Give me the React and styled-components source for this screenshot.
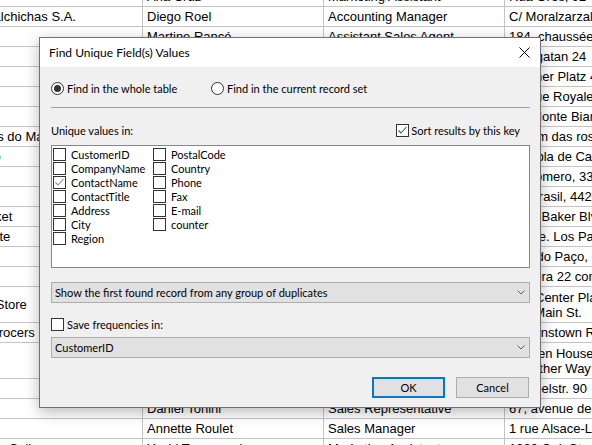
import React from 'react'
import styled, { createGlobalStyle } from 'styled-components'

const GlobalStyle = createGlobalStyle`
  *, *::before, *::after { box-sizing: border-box; }
  html, body { margin: 0; padding: 0; background: #fff; }
  body { width: 592px; height: 445px; overflow: hidden; }
`;

const uiFont = `"Lato", "Liberation Sans", sans-serif`;

const rows = [
  ['Familia Arquibaldo', 'Aria Cruz', 'Marketing Assistant', 'Rua Orós, 92'],
  ['FISSA Fabrica Inter. Salchichas S.A.', 'Diego Roel', 'Accounting Manager', 'C/ Moralzarzal, 86'],
  ['Folies gourmandes', 'Martine Rancé', 'Assistant Sales Agent', '184, chaussée de Tournai'],
  ['Folk och fä HB', 'Maria Larsson', 'Owner', 'Åkergatan 24'],
  ['Frankenversand', 'Peter Franken', 'Marketing Manager', 'Berliner Platz 43'],
  ['France restauration', 'Carine Schmitt', 'Marketing Manager', '54, rue Royale'],
  ['Franchi S.p.A.', 'Paolo Accorti', 'Sales Representative', 'Via Monte Bianco 34'],
  ['Furia Bacalhau e Frutos do Mar', 'Lino Rodriguez', 'Sales Manager', 'Jardim das rosas n. 32'],
  ['Galería del gastrónomo', 'Eduardo Saavedra', 'Marketing Manager', 'Rambla de Cataluña, 23'],
  ['Godos Cocina Típica', 'José Pedro Freyre', 'Sales Manager', 'C/ Romero, 33'],
  ['Gourmet Lanchonetes', 'André Fonseca', 'Sales Associate', 'Av. Brasil, 442'],
  ['Great Lakes Food Market', 'Howard Snyder', 'Marketing Manager', '2732 Baker Blvd.'],
  ['GROSELLA-Restaurante', 'Manuel Pereira', 'Owner', '5ª Ave. Los Palos Grandes'],
  ['Hanari Carnes', 'Mario Pontes', 'Accounting Manager', 'Rua do Paço, 67'],
  ['HILARION-Abastos', 'Carlos Hernández', 'Sales Representative', 'Carrera 22 con Ave. Carlos Soublette #8-35'],
  ['Hungry Coyote Import Store', 'Yoshi Latimer', 'Sales Representative', 'City Center Plaza\n516 Main St.'],
  ['Hungry Owl All-Night Grocers', 'Patricia McKenna', 'Sales Associate', '8 Johnstown Road'],
  ['Island Trading', 'Helen Bennett', 'Marketing Manager', 'Garden House\nCrowther Way'],
  ['Königlich Essen', 'Philip Cramer', 'Sales Associate', 'Maubelstr. 90'],
  ["La corne d'abondance", 'Daniel Tonini', 'Sales Representative', "67, avenue de l'Europe"],
  ["La maison d'Asie", 'Annette Roulet', 'Sales Manager', '1 rue Alsace-Lorraine'],
  ['Laughing Bacchus Wine Cellars', 'Yoshi Tannamuri', 'Marketing Assistant', '1900 Oak St.'],
];

const fieldsLeft = ['CustomerID', 'CompanyName', 'ContactName', 'ContactTitle', 'Address', 'City', 'Region'];
const fieldsRight = ['PostalCode', 'Country', 'Phone', 'Fax', 'E-mail', 'counter'];

const Screen = styled.div`
  position: relative;
  width: 592px;
  height: 445px;
  overflow: hidden;
`;

// the sheet is scrolled a little to the right and down
const Grid = styled.div`
  margin-left: -139px;
  margin-top: -13px;
  font-family: "Liberation Sans", Arial, sans-serif;
  font-size: 13px;
  color: #000;
`;

const Row = styled.div`
  display: grid;
  grid-template-columns: 282px 181px 181px 300px;
  height: ${p => (p.$tall ? '36px' : '20px')};
  border-bottom: 1px solid #c4c4c4;
`;

const Cell = styled.div`
  display: flex;
  align-items: center;
  padding: 0 4px;
  border-right: 1px solid #c4c4c4;
  white-space: pre;
  line-height: 15px;
  overflow: hidden;
`;

const Dialog = styled.div`
  position: absolute;
  left: 39px;
  top: 37px;
  width: 502px;
  background: #f0f0f0;
  border: 1px solid #707070;
  box-shadow: 0 4px 14px rgba(0, 0, 0, 0.28);
  font-family: ${uiFont};
  font-size: 11px;
  color: #000;
`;

const TitleBar = styled.div`
  height: 29px;
  background: #fff;
  display: flex;
  align-items: center;
  justify-content: space-between;
  padding: 0 10px 0 9px;
`;

const Title = styled.span`
  font-size: 12px;
`;

const CloseBtn = styled.span`
  display: flex;
  width: 11px;
  height: 11px;
`;

const Body = styled.div`
  display: flex;
  flex-direction: column;
  padding: 14px 10px 9px 11px;
`;

const OptionRow = styled.div`
  display: flex;
  align-items: center;
  height: 14px;
  margin-top: ${p => p.$mt || 0}px;
  justify-content: ${p => (p.$spread ? 'space-between' : 'flex-start')};
`;

const RadioItem = styled.label`
  display: flex;
  align-items: center;
  gap: 3px;
  width: ${p => p.$w || 'auto'};
`;

const Radio = styled.span`
  width: 13px;
  height: 13px;
  border-radius: 50%;
  border: 1px solid #333;
  background: #fff;
  display: flex;
  align-items: center;
  justify-content: center;
  &::after {
    content: '';
    width: 7px;
    height: 7px;
    border-radius: 50%;
    background: ${p => (p.$on ? '#333' : 'transparent')};
  }
`;

const Separator = styled.div`
  height: 1px;
  background: #a0a0a0;
  margin-top: 12px;
`;

const CheckItem = styled.label`
  display: flex;
  align-items: center;
  gap: ${p => p.$gap || 3}px;
  height: 14px;
  margin-right: ${p => p.$mr || 0}px;
`;

const Box = styled.span`
  width: 13px;
  height: 13px;
  border: 1px solid #333;
  background: #fff;
  display: flex;
  align-items: center;
  justify-content: center;
  flex-shrink: 0;
`;

const ListBox = styled.div`
  margin-top: 8px;
  height: 123px;
  background: #fff;
  border: 1px solid #828790;
  padding: 1px 1px;
  display: grid;
  grid-template-columns: 100px 100px;
  align-content: start;
`;

const ListCol = styled.div`
  display: flex;
  flex-direction: column;
`;

const ListItem = styled.label`
  display: flex;
  align-items: center;
  gap: 5px;
  height: 14px;
`;

const Combo = styled.div`
  margin-top: ${p => p.$mt}px;
  height: 21px;
  background: #e1e1e1;
  border: 1px solid #adadad;
  display: flex;
  align-items: center;
  justify-content: space-between;
  padding: 0 4px 0 3px;
`;

const Buttons = styled.div`
  margin-top: 19px;
  display: flex;
  justify-content: flex-end;
  gap: 11px;
  padding-right: 1px;
`;

const Button = styled.button`
  width: 73px;
  height: 21px;
  background: #e1e1e1;
  border: ${p => (p.$default ? '2px solid #0078d7' : '1px solid #adadad')};
  font-family: ${uiFont};
  font-size: 11px;
  color: #000;
  padding: 0;
`;

const Check = ({ color = '#444' }) => (
  <svg width="11" height="11" viewBox="0 0 11 11">
    <polyline points="1.5,5.5 4,8 9.5,2" fill="none" stroke={color} strokeWidth="1.1" />
  </svg>
);

const Chevron = () => (
  <svg width="8" height="5" viewBox="0 0 8 5">
    <polyline points="0.5,0.5 4,4 7.5,0.5" fill="none" stroke="#606060" strokeWidth="1" />
  </svg>
);

const CheckBox = ({ on, color }) => <Box>{on && <Check color={color} />}</Box>;

const App = () => {
  return (
    <Screen>
      <GlobalStyle />
      <Grid>
        {rows.map((r, i) => (
          <Row key={i} $tall={r[3].includes('\n')}>
            {r.map((c, j) => (
              <Cell key={j}>{c}</Cell>
            ))}
          </Row>
        ))}
      </Grid>
      <Dialog>
        <TitleBar>
          <Title>Find Unique Field(s) Values</Title>
          <CloseBtn>
            <svg width="11" height="11" viewBox="0 0 11 11">
              <path d="M0.5 0.5 L10.5 10.5 M10.5 0.5 L0.5 10.5" stroke="#000" strokeWidth="1" />
            </svg>
          </CloseBtn>
        </TitleBar>
        <Body>
          <OptionRow>
            <RadioItem $w="160px">
              <Radio $on />
              Find in the whole table
            </RadioItem>
            <RadioItem>
              <Radio />
              Find in the current record set
            </RadioItem>
          </OptionRow>
          <Separator />
          <OptionRow $mt={15} $spread>
            <span>Unique values in:</span>
            <CheckItem $gap={2} $mr={10}>
              <CheckBox on color="#555" />
              Sort results by this key
            </CheckItem>
          </OptionRow>
          <ListBox>
            <ListCol>
              {fieldsLeft.map(f => (
                <ListItem key={f}>
                  <CheckBox on={f === 'ContactName'} color="#8a8a8a" />
                  {f}
                </ListItem>
              ))}
            </ListCol>
            <ListCol>
              {fieldsRight.map(f => (
                <ListItem key={f}>
                  <CheckBox />
                  {f}
                </ListItem>
              ))}
            </ListCol>
          </ListBox>
          <Combo $mt={14}>
            <span>Show the first found record from any group of duplicates</span>
            <Chevron />
          </Combo>
          <OptionRow $mt={14}>
            <CheckItem>
              <CheckBox />
              Save frequencies in:
            </CheckItem>
          </OptionRow>
          <Combo $mt={6}>
            <span>CustomerID</span>
            <Chevron />
          </Combo>
          <Buttons>
            <Button $default>OK</Button>
            <Button>Cancel</Button>
          </Buttons>
        </Body>
      </Dialog>
    </Screen>
  )
}

export default App
